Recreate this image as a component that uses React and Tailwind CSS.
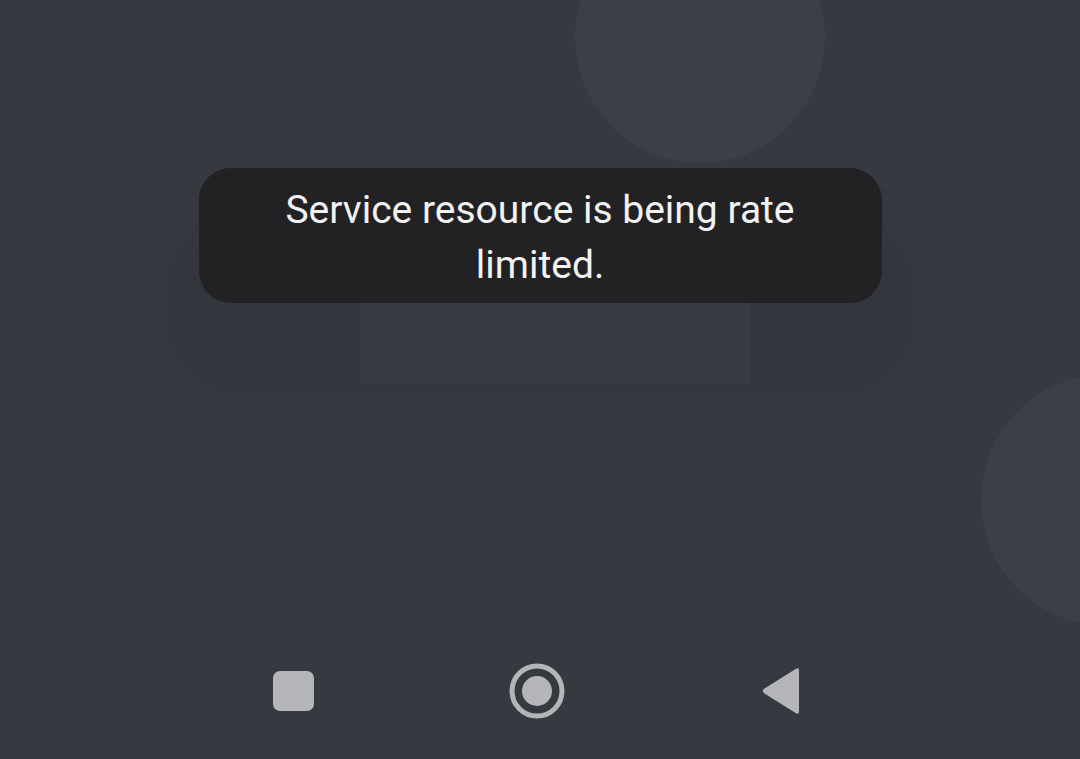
import React from 'react';

function NavBar() {
  return (
    <div className="h-[136px] flex justify-center items-center pr-[6px]">
      <div className="grid grid-cols-[244px_244px_244px] items-center justify-items-center">
        {/* recents */}
        <div className="w-[41px] h-[40px] rounded-[7px] bg-[#b4b5b9]" />
        {/* home */}
        <svg width="56" height="56" viewBox="0 0 56 56">
          <circle cx="28" cy="28" r="25" fill="none" stroke="#b4b5b9" strokeWidth="5" />
          <circle cx="28" cy="28" r="15" fill="#b4b5b9" />
        </svg>
        {/* back */}
        <svg width="40" height="48" viewBox="0 0 40 48">
          <path
            d="M3.5 21.6 L35 1.8 Q38 0 38 3.5 L38 44.5 Q38 48 35 46.2 L3.5 26.4 Q0 24 3.5 21.6 Z"
            fill="#b4b5b9"
          />
        </svg>
      </div>
    </div>
  );
}

export default function App() {
  return (
    <div
      className="relative w-full h-[759px] overflow-hidden bg-[#363940] flex flex-col"
      style={{ fontFamily: 'Roboto, "Noto Sans", sans-serif' }}
    >
      {/* decorative background circles */}
      <div className="absolute left-[575px] top-[-87px] w-[250px] h-[250px] rounded-full bg-[#3c3f47]" />
      <div className="absolute left-[981px] top-[374px] w-[252px] h-[252px] rounded-full bg-[#3c3f47]" />

      {/* blurred dialog behind the toast */}
      <div className="absolute left-[170px] top-[215px] w-[740px] h-[175px] rounded-[70px] bg-black/5 blur-xl" />
      <div className="absolute left-[360px] top-[250px] w-[390px] h-[134px] bg-[#393b42]" />

      <div className="relative flex-1 flex flex-col items-center pt-[168px]">
        {/* toast */}
        <div className="w-[683px] h-[135px] rounded-[32px] bg-[#222224] pt-[15px] text-center text-[#f2f2f2] text-[39px] leading-[55px]">
          Service resource is being rate
          <br />
          limited.
        </div>
      </div>

      <NavBar />
    </div>
  );
}
